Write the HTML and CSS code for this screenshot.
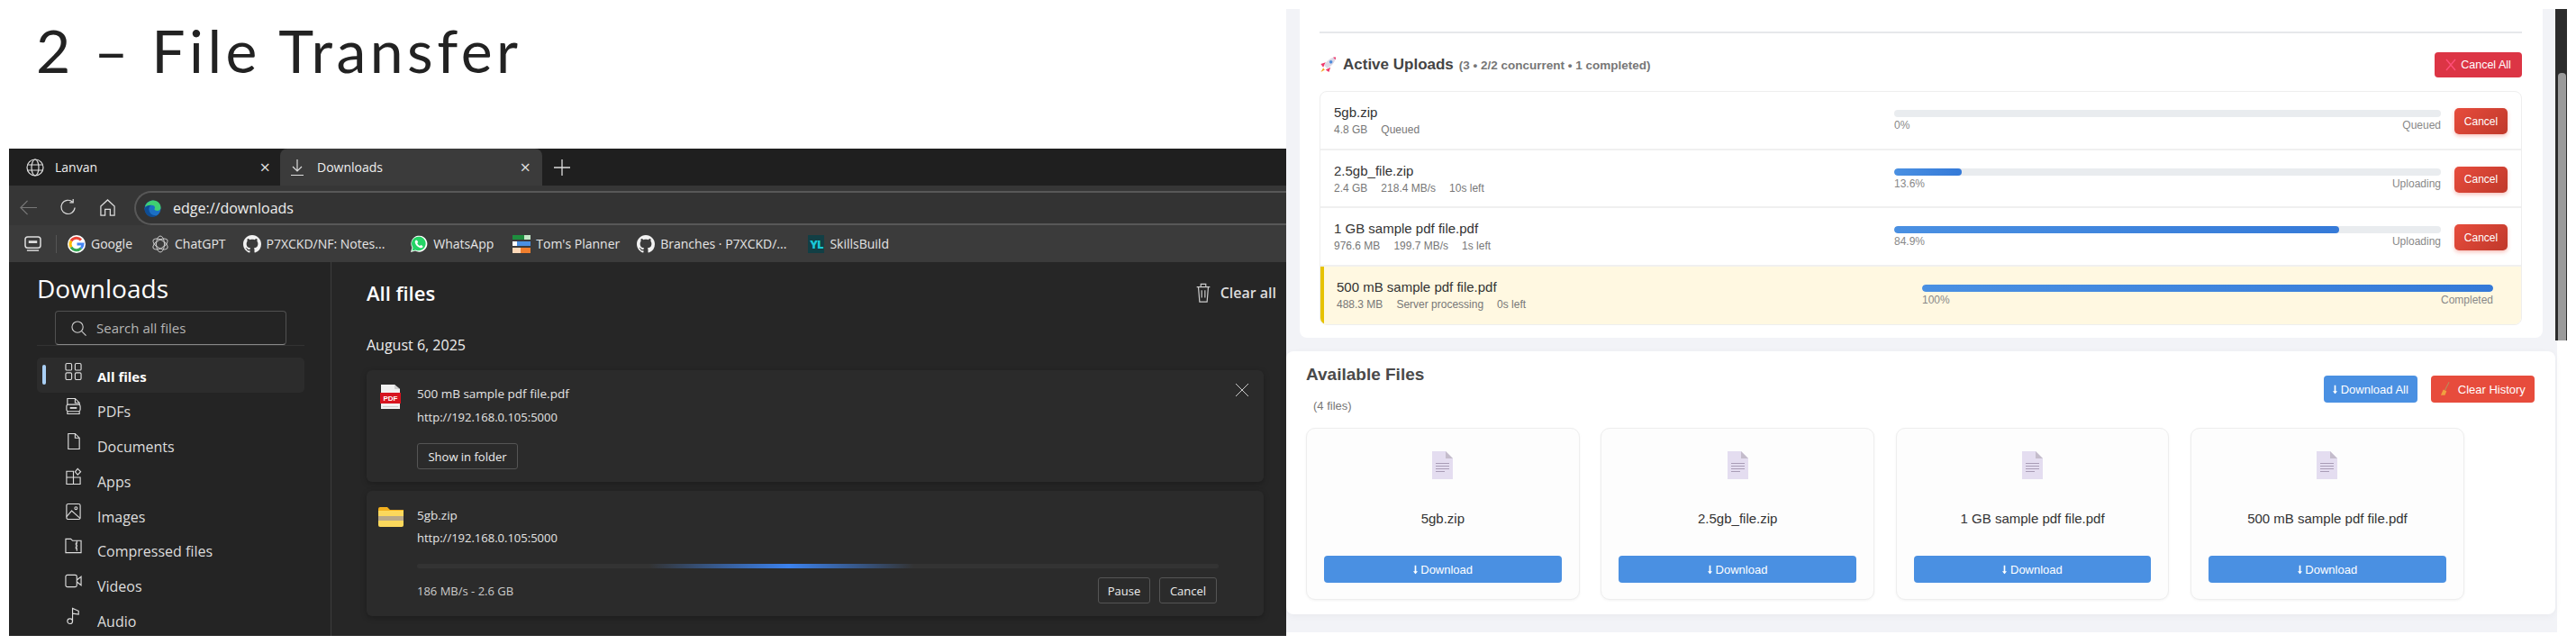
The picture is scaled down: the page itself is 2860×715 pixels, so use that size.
FILE: index.html
```html
<!DOCTYPE html>
<html lang="en">
<head>
    <meta charset="UTF-8">
    <title>2 - File Transfer</title>
    <link rel="stylesheet" href="styles.css">
</head>
<body>
<svg class="defs" width="0" height="0">
    <symbol id="gh" viewBox="0 0 16 16"><path fill="#f2f2f2" d="M8 0C3.58 0 0 3.58 0 8c0 3.54 2.29 6.53 5.47 7.59.4.07.55-.17.55-.38 0-.19-.01-.82-.01-1.49-2.01.37-2.53-.49-2.69-.94-.09-.23-.48-.94-.82-1.13-.28-.15-.68-.52-.01-.53.63-.01 1.08.58 1.23.82.72 1.21 1.87.87 2.33.66.07-.52.28-.87.51-1.07-1.78-.2-3.64-.89-3.64-3.95 0-.87.31-1.59.82-2.15-.08-.2-.36-1.02.08-2.12 0 0 .67-.21 2.2.82.64-.18 1.32-.27 2-.27.68 0 1.36.09 2 .27 1.53-1.04 2.2-.82 2.2-.82.44 1.1.16 1.92.08 2.12.51.56.82 1.27.82 2.15 0 3.07-1.87 3.75-3.65 3.95.29.25.54.73.54 1.48 0 1.07-.01 1.93-.01 2.2 0 .21.15.46.55.38A8.013 8.013 0 0016 8c0-4.42-3.58-8-8-8z"/></symbol>
    <symbol id="doc" viewBox="0 0 23 31"><path fill="#e4ddf0" d="M0 0h15l8 8v23H0z"/><path fill="#c4bccb" d="M15 0l8 8h-8z"/><path stroke="#a99db6" stroke-width="1" fill="none" d="M4 13.500h15M4 16.500h15M4 19.500h15M4 22.500h10"/></symbol>
    <symbol id="down" viewBox="0 0 6 12"><path fill="#fff" d="M2 0h2v8h2l-3 4-3-4h2z"/></symbol>
</svg>
<div class="page">
    <div class="left">
        <div class="title">2 – File Transfer</div>
        <div class="browser">
            <div class="tabbar">
                <div class="tab">
                    <svg class="tab-ico" viewBox="0 0 20 20" fill="none" stroke="#ddd" stroke-width="1.200"><circle cx="10" cy="10" r="9"/><ellipse cx="10" cy="10" rx="4" ry="9"/><path d="M1.500 7h17M1.500 13h17"/></svg>
                    <span class="tab-name">Lanvan</span>
                    <span class="tab-x">×</span>
                </div>
                <div class="tab active">
                    <svg class="tab-ico" viewBox="0 0 16 20" fill="none" stroke="#ddd" stroke-width="1.200"><path d="M8 1v13M3 9l5 5 5-5M1 18.500h14"/></svg>
                    <span class="tab-name">Downloads</span>
                    <span class="tab-x">×</span>
                </div>
                <svg class="tab-plus" viewBox="0 0 18 18" stroke="#ddd" stroke-width="1.300"><path d="M9 0v18M0 9h18"/></svg>
            </div>
            <div class="toolbar">
                <svg class="nav-btn back" viewBox="0 0 20 18" fill="none" stroke="#777" stroke-width="1.300"><path d="M20 9H1M9 1L1 9l8 8"/></svg>
                <svg class="nav-btn reload" viewBox="0 0 20 20" fill="none" stroke="#ddd" stroke-width="1.300"><path d="M15.500 3.500A8 8 0 1 0 18 10"/><path d="M16 0v4h-4"/></svg>
                <svg class="nav-btn home" viewBox="0 0 20 20" fill="none" stroke="#ddd" stroke-width="1.300"><path d="M2 8.500L10 1l8 7.500V19h-5v-7H7v7H2z"/></svg>
                <div class="address">
                    <svg class="edge" viewBox="0 0 20 20"><circle cx="10" cy="10" r="9.500" fill="#1b6fc4"/><path fill="#3fcf72" d="M1 8C3 2 8 .5 11 .5c5 0 8.500 4 8.500 8.500 0 2.500-2 3.500-4 3.500-2 0-3.500-.8-3.500-2 1.500-1 .5-4.500-3-4.500C5 6 2 7.500 1 8z"/><path fill="#0f4d94" d="M8.500 6C6 7 5 10 6 13c1 3 4 6 9 5-2 1.500-4 2-5 2C4 20 .5 15 .5 10 2 7 5 6 8.500 6z"/></svg>
                    <span>edge://downloads</span>
                </div>
            </div>
            <div class="bookmarks">
                <svg class="side-ico" viewBox="0 0 20 18" fill="none" stroke="#ddd" stroke-width="1.600"><rect x="1" y="1" width="18" height="13" rx="3"/><path d="M5 7h10" stroke-width="3"/><path d="M3 17h14"/></svg>
                <span class="bm-sep"></span>
                <div class="bm g">
                    <svg viewBox="0 0 20 20"><circle cx="10" cy="10" r="10" fill="#fff"/><path fill="none" stroke-width="3" stroke="#ea4335" d="M15 5.500A7 7 0 0 0 4 6.500"/><path fill="none" stroke-width="3" stroke="#fbbc05" d="M4 6.500a7 7 0 0 0 0 7"/><path fill="none" stroke-width="3" stroke="#34a853" d="M4 13.500a7 7 0 0 0 11 1"/><path fill="none" stroke-width="3" stroke="#4285f4" d="M15 14.500a7 7 0 0 0 2-4.500h-6.500"/></svg>
                    <span>Google</span>
                </div>
                <div class="bm c">
                    <svg viewBox="0 0 20 20" fill="none" stroke="#c9c9c9" stroke-width="1"><ellipse cx="10" cy="10" rx="4.500" ry="9"/><ellipse cx="10" cy="10" rx="4.500" ry="9" transform="rotate(60 10 10)"/><ellipse cx="10" cy="10" rx="4.500" ry="9" transform="rotate(120 10 10)"/></svg>
                    <span>ChatGPT</span>
                </div>
                <div class="bm n">
                    <svg viewBox="0 0 16 16"><use href="#gh"/></svg>
                    <span>P7XCKD/NF: Notes...</span>
                </div>
                <div class="bm w">
                    <svg viewBox="0 0 20 20"><path fill="#fff" d="M1 19l1.500-5A9 9 0 1 1 6 17.500z"/><path fill="#25d366" d="M2.500 17.500l1-3.500A7.800 7.800 0 1 1 6.300 16.400z"/><path fill="#fff" d="M7 5.500c-1 .5-1.500 1.500-1.200 3 .5 2.500 3 5 5.700 5.700 1.500.3 2.500-.2 3-1.200l-.3-1-2-1-1 1c-1.300-.5-2.500-1.700-3-3l1-1-1-2z"/></svg>
                    <span>WhatsApp</span>
                </div>
                <div class="bm t">
                    <svg viewBox="0 0 20 20"><path fill="#1e8e3e" d="M0 0h13v5H0z"/><path fill="#c6e8c9" d="M13 0h7v5h-7z"/><path fill="#fff" d="M0 7h5v5H0z"/><path fill="#4a90e2" d="M5 7h15v5H5z"/><path fill="#ffd9b8" d="M0 14h9v6H0z"/><path fill="#f07f2e" d="M9 14h11v6H9z"/></svg>
                    <span>Tom's Planner</span>
                </div>
                <div class="bm b">
                    <svg viewBox="0 0 16 16"><use href="#gh"/></svg>
                    <span>Branches · P7XCKD/...</span>
                </div>
                <div class="bm s">
                    <span class="yl">YL</span>
                    <span>SkillsBuild</span>
                </div>
            </div>
            <div class="downloads">
                <div class="sidebar">
                    <h1 class="dl-title">Downloads</h1>
                    <div class="search-wrap">
                        <div class="search">
                            <svg viewBox="0 0 18 18" fill="none" stroke="#ccc" stroke-width="1.200"><circle cx="7.500" cy="7.500" r="6.500"/><path d="M12 12l5.500 5.500"/></svg>
                            <span>Search all files</span>
                        </div>
                    </div>
                    <ul class="nav">
                        <li class="on"><span class="bar"></span>
                            <svg viewBox="0 0 20 20" fill="none" stroke="#ddd" stroke-width="1.200"><rect x="1" y="1" width="7" height="8" rx="1.500"/><rect x="12" y="1" width="7" height="8" rx="1.500"/><rect x="1" y="12" width="7" height="8" rx="1.500"/><rect x="12" y="12" width="7" height="8" rx="1.500"/></svg>
                            All files</li>
                        <li><svg viewBox="0 0 20 20" fill="none" stroke="#ddd" stroke-width="1.200"><path d="M3 8V1h9l5 5v2"/><rect x="2" y="8" width="16" height="8" rx="2"/><path d="M3 16v3h14v-3M12 1v5h5"/><path d="M6 12h8" stroke-width="2"/></svg>PDFs</li>
                        <li><svg viewBox="0 0 20 20" fill="none" stroke="#ddd" stroke-width="1.200"><path d="M4 1h8l5 5v13H4z"/><path d="M12 1v5h5"/></svg>Documents</li>
                        <li><svg viewBox="0 0 20 20" fill="none" stroke="#ddd" stroke-width="1.200"><path d="M2 4h8v15H2zM2 11h16v8h-8M10 4v7"/><path d="M15 1l3.500 3.500L15 8l-3-3.500z"/></svg>Apps</li>
                        <li><svg viewBox="0 0 20 20" fill="none" stroke="#ddd" stroke-width="1.200"><rect x="2" y="1" width="16" height="18" rx="2"/><circle cx="13" cy="6" r="1.500"/><path d="M2 16l6-7 10 9"/></svg>Images</li>
                        <li><svg viewBox="0 0 20 20" fill="none" stroke="#ddd" stroke-width="1.200"><path d="M1 18V2h6l2 2h10v14z"/><path d="M14 4v3h-1v2h1v2h-1v2h1v3"/></svg>Compressed files</li>
                        <li><svg viewBox="0 0 20 20" fill="none" stroke="#ddd" stroke-width="1.200"><rect x="1" y="3" width="13" height="14" rx="2"/><path d="M14 9l5-4v10l-5-4"/></svg>Videos</li>
                        <li><svg viewBox="0 0 20 20" fill="none" stroke="#ddd" stroke-width="1.200"><circle cx="6" cy="16" r="3"/><path d="M9 16V1l7 3v4l-7-1"/></svg>Audio</li>
                    </ul>
                </div>
                <div class="dl-main">
                    <div class="dl-head">
                        <h2>All files</h2>
                        <div class="clear-all">
                            <svg viewBox="0 0 18 24" fill="none" stroke="#ccc" stroke-width="1.300"><path d="M1 5h16M3 5l1.500 18h9L15 5M6 5V1.500h6V5M7 9v9M11 9v9"/></svg>
                            Clear all
                        </div>
                    </div>
                    <div class="date">August 6, 2025</div>
                    <div class="dl-card first">
                        <svg class="pdf" viewBox="0 0 23 27">
                            <path fill="#f1f1f1" d="M1 0h15l6 5v22H1z"/>
                            <path fill="#cfcfcf" d="M16 0l6 5h-6zM3 24h17v1H3z"/>
                            <rect y="9" width="23" height="12" fill="#d7141f"/>
                            <text x="11.500" y="18" text-anchor="middle" font-size="8" font-weight="700" fill="#fff" font-family="Liberation Sans">PDF</text>
                        </svg>
                        <div class="dl-body">
                            <div class="dl-name">500 mB sample pdf file.pdf</div>
                            <div class="dl-url">http://192.168.0.105:5000</div>
                            <button class="dk-btn folder">Show in folder</button>
                        </div>
                        <svg class="dl-x" viewBox="0 0 16 16" fill="none" stroke="#ccc" stroke-width="1"><path d="M1 1l14 14M15 1L1 15"/></svg>
                    </div>
                    <div class="dl-card second">
                        <svg class="zip" viewBox="0 0 28 22">
                            <path fill="#f2b01e" d="M0 2a2 2 0 0 1 2-2h8l3 3h15v6H0z"/>
                            <path fill="#fbd85c" d="M0 4h28v16a2 2 0 0 1-2 2H2a2 2 0 0 1-2-2z"/>
                            <rect y="10" width="28" height="5" fill="#b9a888"/>
                        </svg>
                        <div class="dl-body">
                            <div class="dl-name">5gb.zip</div>
                            <div class="dl-url">http://192.168.0.105:5000</div>
                            <div class="dl-progress"></div>
                            <div class="dl-foot">
                                <span class="dl-speed">186 MB/s - 2.6 GB</span>
                                <button class="dk-btn pause">Pause</button>
                                <button class="dk-btn cancel">Cancel</button>
                            </div>
                        </div>
                    </div>
                </div>
            </div>
        </div>
    </div>
    <div class="right">
        <div class="upper">
            <div class="pane">
                <div class="up-card">
                    <div class="rule"></div>
                    <div class="up-head">
                        <svg class="rocket" viewBox="0 0 20 20">
                            <path fill="#f0386b" d="M7 7L1 9l3 4zM13 13l-2 6-4-3z"/>
                            <path fill="#f5a623" d="M4 14l2 2-5 3z"/>
                            <path fill="#dcd8e6" d="M19.500.5c-6 .5-11 4-14.500 10l4 4c6-3.500 10-8.500 10.500-14z"/>
                            <circle cx="13.500" cy="6.500" r="2" fill="#4f8ddc"/>
                            <path fill="#f0386b" d="M16 .9c1 .5 2.500 2 3 3 .4-1 .5-2.500.5-3.400-1 0-2.500.1-3.500.4z"/>
                        </svg>
                        <h2>Active Uploads</h2>
                        <span class="up-count">(3 • 2/2 concurrent • 1 completed)</span>
                        <button class="cancel-all">
                            <svg viewBox="0 0 12 14" fill="none" stroke="#ff4f7a" stroke-width="1.400"><path d="M1 1l10 12M11 1L1 13"/></svg>
                            Cancel All
                        </button>
                    </div>
                    <div class="up-list">
                        <div class="up-row">
                            <div class="up-info">
                                <div class="up-name">5gb.zip</div>
                                <div class="up-meta"><span>4.8 GB</span><span>Queued</span></div>
                            </div>
                            <div class="up-prog">
                                <div class="track"></div>
                                <div class="prog-label"><span>0%</span><span>Queued</span></div>
                            </div>
                            <button class="row-cancel">Cancel</button>
                        </div>
                        <div class="up-row">
                            <div class="up-info">
                                <div class="up-name">2.5gb_file.zip</div>
                                <div class="up-meta"><span>2.4 GB</span><span>218.4 MB/s</span><span>10s left</span></div>
                            </div>
                            <div class="up-prog">
                                <div class="track"><div class="fill" style="width:12.400%"></div></div>
                                <div class="prog-label"><span>13.6%</span><span>Uploading</span></div>
                            </div>
                            <button class="row-cancel">Cancel</button>
                        </div>
                        <div class="up-row">
                            <div class="up-info">
                                <div class="up-name">1 GB sample pdf file.pdf</div>
                                <div class="up-meta"><span>976.6 MB</span><span>199.7 MB/s</span><span>1s left</span></div>
                            </div>
                            <div class="up-prog">
                                <div class="track"><div class="fill" style="width:81.400%"></div></div>
                                <div class="prog-label"><span>84.9%</span><span>Uploading</span></div>
                            </div>
                            <button class="row-cancel">Cancel</button>
                        </div>
                        <div class="up-row done">
                            <div class="up-info">
                                <div class="up-name">500 mB sample pdf file.pdf</div>
                                <div class="up-meta"><span>488.3 MB</span><span>Server processing</span><span>0s left</span></div>
                            </div>
                            <div class="up-prog">
                                <div class="track"><div class="fill" style="width:100%"></div></div>
                                <div class="prog-label"><span>100%</span><span>Completed</span></div>
                            </div>
                        </div>
                    </div>
                </div>
            </div>
            <div class="scrollbar"><div class="thumb"></div></div>
        </div>
        <div class="lower">
            <div class="files-card">
                <div class="files-head">
                    <div>
                        <h2>Available Files</h2>
                        <div class="files-count">(4 files)</div>
                    </div>
                    <div class="files-actions">
                        <button class="act blue"><svg class="arrow" viewBox="0 0 6 12"><use href="#down"/></svg> Download All</button>
                        <button class="act red">
                            <svg class="broom" viewBox="0 0 12 16"><path stroke="#b98a5a" stroke-width="1.200" d="M11 0L6 10"/><path fill="#f0a040" d="M4 9l4 2-2 5H1z"/></svg>
                            Clear History
                        </button>
                    </div>
                </div>
                <div class="files-grid">
                    <div class="file">
                        <svg class="doc" viewBox="0 0 23 31"><use href="#doc"/></svg>
                        <div class="file-name">5gb.zip</div>
                        <button class="file-btn"><svg class="arrow" viewBox="0 0 6 12"><use href="#down"/></svg> Download</button>
                    </div>
                    <div class="file">
                        <svg class="doc" viewBox="0 0 23 31"><use href="#doc"/></svg>
                        <div class="file-name">2.5gb_file.zip</div>
                        <button class="file-btn"><svg class="arrow" viewBox="0 0 6 12"><use href="#down"/></svg> Download</button>
                    </div>
                    <div class="file">
                        <svg class="doc" viewBox="0 0 23 31"><use href="#doc"/></svg>
                        <div class="file-name">1 GB sample pdf file.pdf</div>
                        <button class="file-btn"><svg class="arrow" viewBox="0 0 6 12"><use href="#down"/></svg> Download</button>
                    </div>
                    <div class="file">
                        <svg class="doc" viewBox="0 0 23 31"><use href="#doc"/></svg>
                        <div class="file-name">500 mB sample pdf file.pdf</div>
                        <button class="file-btn"><svg class="arrow" viewBox="0 0 6 12"><use href="#down"/></svg> Download</button>
                    </div>
                </div>
            </div>
        </div>
    </div>
</div>
</body>
</html>
```

FILE: styles.css
```css
* {
    box-sizing: border-box;
}
body {
    margin: 0;
    background: #fff;
    font-family: "Liberation Sans", Arial, sans-serif;
}
h1, h2, ul {
    margin: 0;
    padding: 0;
}
button {
    font-family: inherit;
    cursor: pointer;
}
.defs {
    display: block;
    height: 0;
}
.page {
    display: flex;
    width: 2860px;
    height: 715px;
    overflow: hidden;
}
.left {
    width: 1428px;
    padding-left: 10px;
}
.title {
    height: 165px;
    padding: 16px 0 0 30px;
    font-family: Lato, sans-serif;
    font-size: 66px;
    line-height: 80px;
    color: #222;
    letter-spacing: 4.500px;
}

/* browser chrome */
.browser {
    display: flex;
    flex-direction: column;
    height: 541px;
    font-family: "Open Sans", sans-serif;
    color: #eee;
    background: #262626;
}
.tabbar {
    display: flex;
    align-items: center;
    height: 41px;
    background: #1f1f1f;
}
.tab {
    display: flex;
    align-items: center;
    width: 301px;
    height: 41px;
    padding: 0 11px 0 19px;
    font-size: 14px;
}
.tab.active {
    width: 291px;
    padding: 0 13px 0 11px;
    background: #3b3b3b;
    border-radius: 8px 8px 0 0;
}
.tab-ico {
    width: 20px;
    height: 20px;
    margin-right: 12px;
}
.tab.active .tab-ico {
    width: 16px;
    margin-right: 14px;
}
.tab-name {
    flex: 1;
}
.tab-x {
    font-size: 20px;
    color: #ddd;
}
.tab-plus {
    width: 18px;
    height: 18px;
    margin-left: 13px;
}
.toolbar {
    display: flex;
    align-items: flex-start;
    height: 44px;
    padding: 6px 0 0 12px;
    background: #363636;
}
.nav-btn {
    width: 19px;
    height: 19px;
    margin-top: 9px;
}
.nav-btn.reload {
    margin-left: 25px;
}
.nav-btn.home {
    margin-left: 25px;
}
.address {
    display: flex;
    align-items: center;
    flex: 1;
    height: 38px;
    margin-left: 20px;
    padding-left: 9px;
    border: 2px solid #585858;
    border-right: 0;
    border-radius: 19px 0 0 19px;
    background: #333;
    font-size: 16px;
}
.edge {
    width: 19px;
    height: 19px;
    margin-right: 13px;
}
.bookmarks {
    display: flex;
    align-items: center;
    height: 41px;
    padding-left: 17px;
    background: #3b3b3b;
    font-size: 14px;
    color: #e6e6e6;
}
.side-ico {
    width: 19px;
    height: 17px;
}
.bm-sep {
    width: 1px;
    height: 20px;
    margin: 0 12px 0 16px;
    background: #555;
}
.bm {
    display: flex;
    align-items: center;
    gap: 6px;
    white-space: nowrap;
}
.bm svg {
    width: 20px;
    height: 20px;
}
.bm.c { margin-left: 21px; }
.bm.n { margin-left: 19px; }
.bm.w { margin-left: 28px; }
.bm.t { margin-left: 21px; }
.bm.b { margin-left: 19px; }
.bm.s { margin-left: 24px; }
.yl {
    width: 18px;
    height: 20px;
    background: #123f45;
    color: #19c8d8;
    font-weight: 800;
    font-size: 13px;
    line-height: 20px;
    text-align: center;
    letter-spacing: -1px;
}

/* downloads page */
.downloads {
    display: flex;
    flex: 1;
    min-height: 0;
    overflow: hidden;
}
.sidebar {
    width: 358px;
    padding: 0 29px 0 31px;
    background: #242424;
    border-right: 1px solid #3d3d3d;
}
.dl-title {
    margin-top: 10px;
    font-size: 28px;
    line-height: 38px;
    font-weight: 500;
    color: #fff;
}
.search-wrap {
    height: 39px;
    margin-top: 6px;
    padding-left: 20px;
    border-bottom: 1px solid #333;
}
.search {
    display: flex;
    align-items: center;
    width: 257px;
    height: 38px;
    padding-left: 17px;
    border: 1px solid #505050;
    border-bottom-color: #888;
    border-radius: 4px;
    font-size: 15px;
    color: #b5b5b5;
}
.search svg {
    width: 17px;
    height: 17px;
    margin-right: 11px;
}
.nav {
    margin-top: 13px;
    list-style: none;
}
.nav li {
    display: flex;
    align-items: center;
    height: 38.900px;
    padding: 3px 0 0 31px;
    font-size: 16px;
    font-weight: 500;
    color: #ddd;
    border-radius: 5px;
}
.nav li svg {
    width: 19px;
    height: 20px;
    margin: 0 17px 12px 0;
}
.nav li.on {
    position: relative;
    background: #2c2c2c;
    color: #fff;
    font-size: 15px;
    font-weight: 700;
}
.bar {
    position: absolute;
    left: 6px;
    top: 8px;
    width: 4px;
    height: 22px;
    border-radius: 2px;
    background: #a9cff5;
}
.dl-main {
    flex: 1;
    padding: 20px 25px 0 39px;
}
.dl-head {
    display: flex;
    align-items: center;
    justify-content: space-between;
    height: 28px;
    margin-right: -14px;
}
.dl-head h2 {
    font-size: 22px;
    font-weight: 600;
    color: #fff;
}
.clear-all {
    display: flex;
    align-items: center;
    gap: 10px;
    font-size: 16px;
    font-weight: 600;
    color: #ddd;
}
.clear-all svg {
    width: 18px;
    height: 22px;
}
.date {
    margin-top: 32px;
    font-size: 16px;
    line-height: 24px;
    color: #eee;
}
.dl-card {
    display: flex;
    margin-top: 16px;
    border-radius: 6px;
    background: #2b2b2b;
    box-shadow: 0 2px 6px rgba(0, 0, 0, .25);
}
.dl-card.first {
    height: 124px;
    padding: 16px 0 0 15px;
}
.dl-card.second {
    height: 139px;
    margin-top: 10px;
    padding: 18px 0 0 13px;
}
.pdf {
    flex: none;
    width: 23px;
    height: 27px;
    margin-right: 18px;
}
.zip {
    flex: none;
    width: 28px;
    height: 22px;
    margin-right: 15px;
}
.dl-body {
    flex: 1;
}
.dl-name, .dl-url {
    font-size: 13px;
    line-height: 20px;
    color: #e4e4e4;
}
.dl-name {
    font-size: 13.500px;
}
.second .dl-name {
    margin-top: -1px;
}
.dl-url {
    margin-top: 6px;
}
.second .dl-url {
    margin-top: 5px;
}
.dk-btn {
    height: 29px;
    border: 1px solid #555;
    border-radius: 3px;
    background: #2b2b2b;
    color: #eee;
    font-size: 13px;
    font-family: "Open Sans", sans-serif;
    padding: 0;
}
.folder {
    display: block;
    width: 112px;
    margin-top: 19px;
}
.dl-x {
    width: 16px;
    height: 16px;
    margin: -2px 16px 0 0;
}
.dl-progress {
    width: 890px;
    height: 5px;
    margin-top: 19px;
    border-radius: 3px;
    background: linear-gradient(90deg, #333 0, #333 29%, #3b82ee 46.400%, #333 62%, #333 100%);
}
.dl-foot {
    display: flex;
    align-items: center;
    gap: 10px;
    width: 888px;
    margin-top: 10px;
}
.dl-speed {
    flex: 1;
    font-size: 13px;
    color: #ccc;
}
.pause { width: 58px; }
.cancel { width: 64px; }

/* right side, the app */
.right {
    width: 1432px;
    padding-top: 10px;
}
.upper {
    display: flex;
    height: 368px;
}
.pane {
    width: 1409px;
    height: 368px;
    padding: 0 14px 0 15px;
    background: #f2f3f7;
}
.up-card {
    height: 365px;
    padding: 25px 23px 0 22px;
    background: #fff;
    border-radius: 0 0 8px 8px;
}
.rule {
    height: 2px;
    background: #e6e8eb;
}
.up-head {
    display: flex;
    align-items: center;
    height: 28px;
    margin-top: 21px;
}
.rocket {
    width: 19px;
    height: 18px;
    margin-right: 7px;
}
.up-head h2 {
    font-size: 17px;
    color: #444;
}
.up-count {
    flex: 1;
    margin-left: 6px;
    font-size: 13.500px;
    font-weight: 700;
    color: #777;
}
.cancel-all {
    display: flex;
    align-items: center;
    justify-content: center;
    gap: 5px;
    width: 97px;
    height: 28px;
    padding: 0;
    border: 0;
    border-radius: 4px;
    background: #dc3545;
    color: #fff;
    font-size: 12.500px;
}
.cancel-all svg {
    width: 12px;
    height: 14px;
}
.up-list {
    height: 260px;
    margin-top: 15px;
    border: 1px solid #eee;
    border-radius: 8px;
    overflow: hidden;
}
.up-row {
    display: flex;
    align-items: flex-start;
    height: 64.700px;
    padding: 0 15px;
    border-bottom: 2px solid #f0f0f0;
}
.up-info {
    flex: 1;
    padding-top: 14px;
}
.up-name {
    font-size: 15px;
    line-height: 18px;
    color: #333;
}
.up-meta {
    display: flex;
    gap: 15px;
    margin-top: 3px;
    font-size: 12px;
    line-height: 14px;
    color: #777;
}
.up-prog {
    width: 607px;
    padding-top: 20px;
}
.track {
    height: 8px;
    border-radius: 4px;
    background: #e9ecef;
    overflow: hidden;
}
.fill {
    height: 8px;
    border-radius: 4px;
    background: linear-gradient(90deg, #4a90e2, #357ad8);
}
.prog-label {
    display: flex;
    justify-content: space-between;
    margin-top: 2px;
    font-size: 12px;
    line-height: 14px;
    color: #888;
}
.row-cancel {
    width: 59px;
    height: 29px;
    margin: 18px 0 0 15px;
    padding: 0;
    border: 0;
    border-radius: 5px;
    background: linear-gradient(135deg, #e74c3c, #c0392b);
    box-shadow: 0 2px 4px rgba(231, 76, 60, .35);
    color: #fff;
    font-size: 12px;
}
.up-row.done {
    padding: 0 31px 0 14px;
    border-left: 4px solid #e6c200;
    border-bottom: 0;
    background: #fff8e1;
}
.done .up-prog {
    width: 634px;
}
.scrollbar {
    width: 13px;
    height: 368px;
    padding: 71px 1px 0 3px;
    background: #2c2c2c;
}
.thumb {
    height: 297px;
    border-radius: 4px 4px 0 0;
    background: #9b9b9b;
}
.lower {
    width: 1411px;
    height: 324px;
    padding-top: 12px;
    background: #f2f3f7;
}
.files-card {
    width: 1409px;
    height: 292px;
    padding: 14px 23px 0 22px;
    background: #fff;
    border-radius: 8px;
    box-shadow: 0 2px 8px rgba(0, 0, 0, .04);
}
.files-head {
    display: flex;
    justify-content: space-between;
    height: 71px;
}
.files-head h2 {
    font-size: 19px;
    line-height: 24px;
    color: #4a4a4a;
}
.files-count {
    margin-top: 15px;
    padding-left: 8px;
    font-size: 13px;
    line-height: 16px;
    color: #777;
}
.files-actions {
    display: flex;
    gap: 15px;
    margin-top: 13px;
}
.act {
    height: 30px;
    padding: 0;
    border: 0;
    border-radius: 4px;
    color: #fff;
    font-size: 13px;
}
.act.blue {
    width: 104px;
    background: #4a90e2;
}
.act.red {
    width: 115px;
    background: #e74c3c;
}
.arrow {
    width: 5px;
    height: 11px;
    vertical-align: -1px;
}
.broom {
    width: 11px;
    height: 15px;
    margin-right: 5px;
    vertical-align: -2px;
}
.files-grid {
    display: flex;
    gap: 23.700px;
}
.file {
    display: flex;
    flex-direction: column;
    align-items: center;
    width: 303.700px;
    height: 191px;
    padding: 25px 19px 0;
    background: #fdfdfd;
    border: 1px solid #eee;
    border-radius: 10px;
    box-shadow: 0 1px 3px rgba(0, 0, 0, .05);
}
.doc {
    width: 23px;
    height: 31px;
}
.file-name {
    margin-top: 34px;
    font-size: 15px;
    line-height: 20px;
    color: #333;
}
.file-btn {
    width: 100%;
    height: 30px;
    margin-top: 31px;
    padding: 0;
    border: 0;
    border-radius: 4px;
    background: #4a90e2;
    color: #fff;
    font-size: 13px;
}
```
